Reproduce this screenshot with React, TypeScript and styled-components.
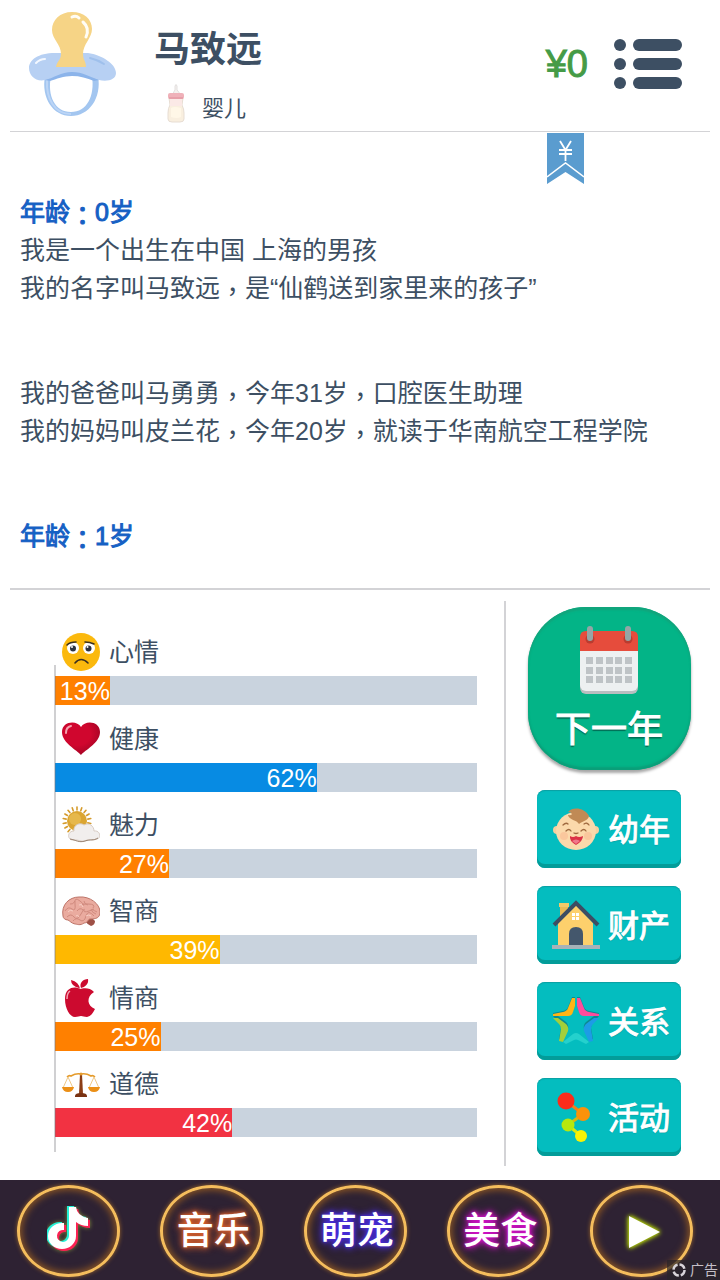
import React from "react";
import styled, { createGlobalStyle } from "styled-components";

const GlobalStyle = createGlobalStyle`
  :root {
    --ink: #3d4f63;
    --blue: #1560c4;
    --line: #d3d3d6;
    --track: #c9d3de;
  }
  * {
    box-sizing: border-box;
  }
  body {
    margin: 0;
    background: #fff;
    color: var(--ink);
    font-family: "Liberation Sans", "Noto Sans CJK SC", sans-serif;
  }
  button {
    font-family: inherit;
    border: none;
    padding: 0;
    cursor: pointer;
  }
`;

const Page = styled.div`
  min-height: 100vh;
  display: flex;
  flex-direction: column;
`;

const Header = styled.header`
  position: relative;
  display: flex;
  align-items: center;
  height: 132px;
  margin: 0 10px;
  padding: 0 28px 4px 18px;
  border-bottom: 1px solid var(--line);
`;

const Profile = styled.div`
  flex: 1;
  align-self: flex-start;
  margin-left: 38px;
  padding-top: 25px;
`;

const Name = styled.h1`
  margin: 0 0 8px;
  font-size: 36px;
  line-height: 50px;
  font-weight: 700;
`;

const Stage = styled.div`
  display: flex;
  align-items: flex-end;
  gap: 16px;
  padding-left: 12px;
  height: 40px;
  font-size: 22px;
  line-height: 28px;
`;

const Money = styled.span`
  margin-right: 26px;
  font-size: 38px;
  line-height: 44px;
  color: #459b46;
  -webkit-text-stroke: 1px #459b46;
`;

const MenuButton = styled.button`
  display: flex;
  background: none;
`;

const Ribbon = styled.button`
  position: absolute;
  top: 133px;
  right: 126px;
  display: flex;
  background: none;
`;

const Log = styled.main`
  flex: 1;
  margin: 0 10px;
  padding: 61px 10px 0;
  border-bottom: 2px solid var(--line);
`;

const Entry = styled.section`
  margin-bottom: 67px;
`;

const Age = styled.h2`
  margin: 0;
  font-size: 25px;
  line-height: 38px;
  font-weight: 400;
  color: var(--blue);
  -webkit-text-stroke: 1px var(--blue);
`;

const Line = styled.p`
  margin: 0;
  font-size: 25px;
  line-height: 38px;
`;

// full-width punctuation sits in the middle of its cell, close to the baseline
const Mark = styled.span`
  font-family: "Noto Sans CJK TC", sans-serif;
  line-height: 1;
  vertical-align: -4px;
`;

const Board = styled.div`
  display: flex;
  padding: 11px 0 14px;
`;

const Stats = styled.ul`
  position: relative;
  flex: 1;
  display: flex;
  flex-direction: column;
  margin: 0 27px 0 55px;
  padding: 18px 0 29px;
  list-style: none;
  &::before {
    content: "";
    position: absolute;
    top: 64px;
    bottom: 14px;
    left: -1px;
    width: 2px;
    background: rgba(120, 120, 125, 0.35);
  }
`;

const Stat = styled.li`
  flex: 1;
  display: flex;
  flex-direction: column;
  justify-content: flex-end;
`;

const StatLabel = styled.div`
  display: flex;
  align-items: center;
  gap: 9px;
  padding: 0 0 5px 7px;
  font-size: 25px;
  line-height: 38px;
`;

const Track = styled.div`
  height: 29px;
  background: var(--track);
`;

const Fill = styled.div<{ $color: string }>`
  height: 29px;
  background: ${({ $color }) => $color};
  color: #fff;
  font-size: 25px;
  line-height: 31px;
  text-align: right;
  white-space: nowrap;
`;

const Actions = styled.div`
  flex: none;
  display: flex;
  flex-direction: column;
  align-items: center;
  width: 216px;
  padding: 6px 8px 10px 0;
  border-left: 2px solid var(--line);
`;

const NextYear = styled.button`
  display: flex;
  flex-direction: column;
  align-items: center;
  gap: 9px;
  width: 163px;
  height: 163px;
  margin-bottom: 20px;
  padding-top: 19px;
  border-radius: 58px;
  background: #03b487;
  box-shadow: inset 0 3px 2px #11a57c, inset 0 -3px 2px #0a9f79,
    0 3px 3px rgba(0, 0, 0, 0.35);
  color: #fff;
  font-size: 36px;
  line-height: 50px;
  -webkit-text-stroke: 1px #fff;
  text-shadow: 0 2px 1px rgba(0, 60, 50, 0.6);
`;

const ActionList = styled.div`
  display: flex;
  flex-direction: column;
  gap: 18px;
`;

const Action = styled.button`
  display: flex;
  align-items: center;
  gap: 8px;
  width: 144px;
  height: 78px;
  padding: 0 0 0 15px;
  border-radius: 8px;
  background: #04bdbf;
  box-shadow: inset 0 -4px 0 #039c99, inset 0 1px 1px #0a9fa2;
  color: #fff;
`;

const ActionLabel = styled.span`
  padding-top: 4px;
  font-size: 31px;
  line-height: 40px;
  -webkit-text-stroke: 1px #fff;
  text-shadow: 0 1px 1px rgba(0, 80, 90, 0.45);
`;

const AdBar = styled.nav`
  position: relative;
  display: flex;
  justify-content: space-between;
  height: 100px;
  padding: 5px 27px 0 17px;
  background: #2e2233;
`;

const AdLink = styled.a`
  display: flex;
  align-items: center;
  justify-content: center;
  width: 103px;
  height: 92px;
  padding-left: 4px;
  border: 3px solid #f5bd5c;
  border-radius: 50%;
  box-shadow: inset 0 0 7px 2px #8c5623, 0 0 4px #9a6428;
  text-decoration: none;
`;

const Neon = styled.span<{ $glow: string }>`
  padding-bottom: 6px;
  color: #fff;
  font-size: 37px;
  font-weight: 500;
  white-space: nowrap;
  text-shadow: 0 0 3px ${({ $glow }) => $glow}, 0 0 6px ${({ $glow }) => $glow},
    0 0 9px ${({ $glow }) => $glow};
`;

const AdTag = styled.span`
  position: absolute;
  right: 0;
  bottom: 0;
  display: flex;
  align-items: center;
  gap: 3px;
  padding: 0 2px 0 4px;
  background: rgba(40, 35, 42, 0.7);
  color: #c4c0c6;
  font-size: 14px;
  line-height: 20px;
`;

const Pacifier = () => (
  <svg width="88" height="107" viewBox="0 0 88 107" aria-hidden="true">
    <path
      d="M17 66C13 88 25 106 43 106S74 88 70 66L64 66C67 86 59 102 43 102S19 86 23 66Z"
      fill="#a3c6f0"
    />
    <path d="M19 70C18 88 26 104 43 104" fill="none" stroke="#bcd5f6" strokeWidth="2" />
    <path
      d="M1 58C1 50 10 43 27 43H60C74 45 88 54 88 63C88 70 79 72 71 70C62 67 55 65 44 65S27 68 17 70C8 72 1 66 1 58Z"
      fill="#b7d0f3"
    />
    <path
      d="M17 70C26 68 33 62 44 62S62 67 71 70L66 71C59 68 52 66 44 66S28 69 22 71Z"
      fill="#8cb4ea"
    />
    <path
      d="M44 2C32 2 24 10 24 20C24 29 33 34 33 44C33 50 29 51 28 57H58C58 51 55 50 55 44C55 34 64 28 64 19C64 9 56 2 44 2Z"
      fill="#f6d486"
    />
    <path
      d="M44 7q4-2 7 1M55 12q7 6 3 15"
      fill="none"
      stroke="#fffdf5"
      strokeWidth="3"
      strokeLinecap="round"
    />
    <path
      d="M8 53q4-4 9-4"
      fill="none"
      stroke="#f4f8ff"
      strokeWidth="2"
      strokeLinecap="round"
    />
    <path
      d="M62 48q8 2 14 6"
      fill="none"
      stroke="#9fc0ec"
      strokeWidth="2"
      strokeLinecap="round"
    />
  </svg>
);

const Bottle = () => (
  <svg width="20" height="40" viewBox="0 0 20 40" aria-hidden="true">
    <path d="M7 11q1-3 2-4V3q1-3 2 0v4q2 2 3 4z" fill="#f5f1ef" stroke="#e2dfde" />
    <path
      d="M3 15h14l-1 7q2 4 2 8v6q0 3-4 3H6q-4 0-4-3v-6q0-5 2-8z"
      fill="#f9efdf"
      stroke="#e7ddd3"
    />
    <path d="M4 16h12v7H4z" fill="#fbe9e6" />
    <path d="M5 25q3-2 10 0v9q-4 2-10 0z" fill="#fff7e7" />
    <rect x="2" y="10" width="16" height="6" rx="2" fill="#efb1b9" />
    <path d="M3 15h14" stroke="#df8d99" />
  </svg>
);

const MenuIcon = () => (
  <svg width="68" height="50" viewBox="0 0 68 50" fill="#3d4f63" aria-hidden="true">
    {[6, 25, 44].map((y) => (
      <g key={y}>
        <circle cx="6" cy={y} r="6" />
        <rect x="19" y={y - 6} width="49" height="12" rx="6" />
      </g>
    ))}
  </svg>
);

const RibbonIcon = () => (
  <svg width="37" height="51" viewBox="0 0 37 51" aria-hidden="true">
    <path d="M0 0h37v51L18.500 39 0 51z" fill="#5a9ccf" />
    <path d="M0 44l18.500-14L37 44" fill="none" stroke="#fff" strokeWidth="1.500" />
    <path
      d="M13 8l5.500 9L24 8M18.500 17v11M12 17h13M12 21h13"
      fill="none"
      stroke="#fff"
      strokeWidth="1.800"
    />
  </svg>
);

const SadFace = () => (
  <svg width="38" height="38" viewBox="0 0 38 38" aria-hidden="true">
    <circle cx="19" cy="19" r="19" fill="#fbb90d" />
    <circle cx="11" cy="15" r="6" fill="#fff" />
    <circle cx="27" cy="15" r="6" fill="#fff" />
    <circle cx="11" cy="15.500" r="3" fill="#2c3340" />
    <circle cx="26.500" cy="15.500" r="3" fill="#2c3340" />
    <circle cx="10" cy="14" r="1" fill="#fff" />
    <circle cx="25.500" cy="14" r="1" fill="#fff" />
    <path
      d="M5 12q3-3 9-3M23 9q5 0 9 2M13 30q6-7 13 0"
      fill="none"
      stroke="#3a3020"
      strokeWidth="1.600"
      strokeLinecap="round"
    />
  </svg>
);

const Heart = () => (
  <svg width="38" height="38" viewBox="0 0 38 38" aria-hidden="true">
    <defs>
      <radialGradient id="heart" cx="0.4" cy="0.35" r="0.7">
        <stop offset="0.5" stopColor="#d0062e" />
        <stop offset="1" stopColor="#a00424" />
      </radialGradient>
    </defs>
    <path
      d="M19 35C15 30 0 23 0 12C0 1 15 0 19 7C23 0 38 1 38 12C38 23 23 30 19 35Z"
      fill="url(#heart)"
    />
    <path d="M4 13q0-6 5-7" fill="none" stroke="#f5a3b0" strokeWidth="2" strokeLinecap="round" />
  </svg>
);

const Weather = () => (
  <svg width="38" height="38" viewBox="0 0 38 38" aria-hidden="true">
    <g stroke="#d59b2b" strokeWidth="1.600" strokeLinecap="round">
      {Array.from({ length: 18 }, (_, i) => (
        <path key={i} d="M15 1v3" transform={`rotate(${i * 20} 15 15)`} />
      ))}
    </g>
    <circle cx="15" cy="15" r="10" fill="#dba531" />
    <circle cx="13" cy="13" r="6" fill="#e6b84c" />
    <path
      d="M11 34C5 34 5 25 12 25C11 19 18 16 22 19C27 16 32 20 32 25C38 24 40 32 35 33C31 35 28 33 25 34C20 37 16 33 11 34Z"
      fill="#f1eeed"
      stroke="#d9cdc5"
    />
    <path d="M8 33C14 34 17 37 23 35S31 35 36 32" fill="none" stroke="#97806f" />
  </svg>
);

const Brain = () => (
  <svg width="38" height="38" viewBox="0 0 38 38" aria-hidden="true">
    <path d="M22 28q8-4 11 1q0 4-4 5q-4-2-7-6z" fill="#9e5046" />
    <path
      d="M1 24C-1 13 7 5 17 5C28 4 38 12 38 20C38 26 34 27 28 27C26 27 26 31 22 31C18 34 15 32 13 32C9 31 8 29 6 28C3 28 1 26 1 24Z"
      fill="#eaab9f"
      stroke="#bd7468"
    />
    <path
      d="M3 19q3-5 7-2t3-5 5-3 3 4 5-1 5 4M5 25q4-4 7 0t7-3 3-4 5 1 4-2 4 3M11 29q3-4 7-1t6-4 8 0M8 12q3 1 5-3M15 19q3-4 6-1M29 17q1 4 5 5M22 9q0 3 4 4"
      fill="none"
      stroke="#d08a7e"
    />
    <path
      d="M6 20q2-3 5-1M17 13q3-2 4 2M24 24q3-2 5 0M14 24q2-2 3 1"
      fill="none"
      stroke="#f7cfc5"
    />
  </svg>
);

const Apple = () => (
  <svg width="38" height="38" viewBox="0 0 38 38" aria-hidden="true">
    <path
      d="M18 10C13 7 3 8 3 20C3 30 8 38 13 38C16 38 17 37 19 37S22 38 25 38C29 37 31 34 33 30C25 27 24 18 32 13C28 8 21 9 18 10Z"
      fill="#cc0a2f"
    />
    <path d="M18 10Q17 3 9 1Q9 7 17 9ZM19 9C17 4 21 0 26 0C27 5 23 8 19 9Z" fill="#cc0a2f" />
    <path d="M5 20q0-6 3-8" fill="none" stroke="#f3a2b1" strokeWidth="1.500" />
  </svg>
);

const Scales = () => (
  <svg width="38" height="38" viewBox="0 0 38 38" aria-hidden="true">
    <path d="M18 9h2l1 20h-4z" fill="#8b3d16" />
    <path d="M13 31q0-3 6-3t6 3v1H13z" fill="#7a3212" />
    <path
      d="M5 12q2-2 4-1 5-3 10-2 5-1 10 2 2-1 4 1"
      fill="none"
      stroke="#e59b2c"
      strokeWidth="1.600"
    />
    <path
      d="M6 12L1 23M6 12l5 11M32 12l-5 11M32 12l5 11"
      fill="none"
      stroke="#efc887"
    />
    <path d="M0 22h12q-1 5-6 5t-6-5zM26 22h12q-1 5-6 5t-6-5z" fill="#eb8f16" />
    <circle cx="19" cy="9" r="1.500" fill="#e59b2c" />
  </svg>
);

const CalendarIcon = () => (
  <svg width="58" height="70" viewBox="0 0 58 70" aria-hidden="true">
    <rect x="0" y="10" width="58" height="58" rx="6" fill="#b9bec0" />
    <rect x="0" y="8" width="58" height="57" rx="6" fill="#edf0f1" />
    <path d="M0 25V11q0-6 6-6h46q6 0 6 6v14z" fill="#e64c3c" />
    <circle cx="10" cy="13" r="4.500" fill="#b93c30" />
    <circle cx="48" cy="13" r="4.500" fill="#b93c30" />
    <rect x="7" y="0" width="6" height="15" rx="3" fill="#95a5a5" />
    <rect x="45" y="0" width="6" height="15" rx="3" fill="#95a5a5" />
    <g fill="#bec3c6">
      {[31, 41, 50].map((y) =>
        [6, 16, 26, 35, 45].map((x) => (
          <rect key={`${x}-${y}`} x={x} y={y} width="7" height="7" />
        ))
      )}
    </g>
  </svg>
);

const BabyIcon = () => (
  <svg width="48" height="48" viewBox="0 0 48 48" aria-hidden="true">
    <circle cx="5" cy="25" r="4" fill="#f7cf9f" />
    <circle cx="43" cy="25" r="4" fill="#f7cf9f" />
    <ellipse cx="24" cy="26" rx="20" ry="19" fill="#fbd9ab" />
    <path d="M16 7C21 1 33 3 37 11C36 16 30 16 27 19C25 15 17 15 16 10C22 11 20 7 16 7Z" fill="#c08a55" />
    <circle cx="12" cy="31" r="4" fill="#fac79d" />
    <circle cx="36" cy="31" r="4" fill="#fac79d" />
    <path
      d="M11 20q3-3 5-1M32 19q3-2 5 1M14 26q3-3 5 0M29 26q3-3 5 0M22 28q2 1 4 0"
      fill="none"
      stroke="#a06a40"
      strokeWidth="1.300"
      strokeLinecap="round"
    />
    <path d="M18 31Q21 33 24 31Q27 33 31 31Q31 36 24 40Q17 36 18 31Z" fill="#dc3146" />
    <path d="M20 36q4-3 8 0l-4 3z" fill="#f0788a" />
  </svg>
);

const HouseIcon = () => (
  <svg width="48" height="50" viewBox="0 0 48 50" aria-hidden="true">
    <path d="M8 4h8v10l-8 7z" fill="#eaba54" />
    <path d="M7 3h10v4H7z" fill="#f3c969" />
    <path d="M6 23L24 5l17 18v22H6z" fill="#fdd06c" />
    <path
      d="M2 25L24 3l22 22"
      fill="none"
      stroke="#3d4d63"
      strokeWidth="4"
    />
    <path d="M17 45V34q0-7 7-7t7 7v11z" fill="#44576c" />
    <path d="M20 13h3v3h-3zM24 13h3v3h-3zM20 17h3v3h-3zM24 17h3v3h-3z" fill="#fff" />
    <path d="M0 45h48v4H0z" fill="#a7b2b8" />
  </svg>
);

const StarIcon = () => (
  <svg width="48" height="48" viewBox="0 0 48 48" aria-hidden="true">
    <g fill="#0b8a92" transform="translate(0 -1)">
      <path d="M20 1h3v8l-2 6q-1 4-5 4H1v-2l10-2q4-1 5-4z" />
      <path d="M28 1h-3v8l2 6q1 4 5 4h15v-2l-10-2q-4-1-5-4z" />
      <path d="M1 20h5l8 6q3 3 2 7l-5 11-4-1 2-11q0-3-2-5z" />
      <path d="M47 20h-5l-8 6q-3 3-2 7l5 11 4-1-2-11q0-3 2-5z" />
    </g>
    <path d="M20 1h3v8l-2 6q-1 4-5 4H1v-2l10-2q4-1 5-4z" fill="#ffb515" />
    <path d="M28 1h-3v8l2 6q1 4 5 4h15v-2l-10-2q-4-1-5-4z" fill="#ff4c9c" />
    <path d="M1 21h5l8 6q3 3 2 7l-5 11-4-1 2-12q0-3-2-5z" fill="#a3cf3b" />
    <path d="M47 21h-5l-8 6q-3 3-2 7l5 11 4-1-2-12q0-3 2-5z" fill="#1d9ce5" />
    <path d="M11 45l10-8q3-2 6 0l10 8-3 2-8-4q-2-1-4 0l-8 4z" fill="#24d1cd" />
  </svg>
);

const DotsIcon = () => (
  <svg width="48" height="52" viewBox="0 0 48 52" aria-hidden="true">
    <path d="M14 10l17 13" stroke="#f47d1a" strokeWidth="3" />
    <path d="M31 23L16 34" stroke="#d6b810" strokeWidth="3" />
    <path d="M16 34l13 11" stroke="#d9ea0a" strokeWidth="3" />
    <circle cx="14" cy="10" r="8.500" fill="#fb2c1a" />
    <circle cx="31" cy="23" r="7" fill="#fb920a" />
    <circle cx="16" cy="34" r="6.500" fill="#b6e80e" />
    <circle cx="29" cy="45" r="6" fill="#f9f205" />
  </svg>
);

const notePath =
  "M23 1h7q1 9 12 11v8q-7 0-12-4v14a14 13 0 1 1-14-13h2v7a6 6 0 1 0 5 6z";

const NoteIcon = () => (
  <svg width="48" height="50" viewBox="0 0 48 50" aria-hidden="true">
    <g style={{ filter: "drop-shadow(0 0 2px #7d8a3a)" }}>
      <path d={notePath} fill="#25f0d6" transform="translate(-3 -1)" />
      <path d={notePath} fill="#fb2153" transform="translate(1 2)" />
      <path d={notePath} fill="#fff" transform="translate(-1 0)" />
    </g>
  </svg>
);

const PlayIcon = () => (
  <svg width="44" height="44" viewBox="0 0 44 44" aria-hidden="true">
    <path
      d="M7 7v32l31-16z"
      fill="#fff"
      style={{ filter: "drop-shadow(0 0 2px #c2dc10) drop-shadow(0 0 2px #a5c800)" }}
    />
  </svg>
);

const SpinnerIcon = () => (
  <svg width="16" height="16" viewBox="0 0 16 16" aria-hidden="true">
    <circle
      cx="8"
      cy="8"
      r="5.500"
      fill="none"
      stroke="#d8d5da"
      strokeWidth="2.500"
      strokeDasharray="6.600 2"
    />
  </svg>
);

const stats = [
  { label: "心情", value: 13, color: "#ff8000", icon: <SadFace /> },
  { label: "健康", value: 62, color: "#078be3", icon: <Heart /> },
  { label: "魅力", value: 27, color: "#ff8000", icon: <Weather /> },
  { label: "智商", value: 39, color: "#ffb800", icon: <Brain /> },
  { label: "情商", value: 25, color: "#ff8000", icon: <Apple /> },
  { label: "道德", value: 42, color: "#f23242", icon: <Scales /> },
];

const actions = [
  { label: "幼年", icon: <BabyIcon /> },
  { label: "财产", icon: <HouseIcon /> },
  { label: "关系", icon: <StarIcon /> },
  { label: "活动", icon: <DotsIcon /> },
];

const Text = ({ children }: { children: string }) => (
  <>
    {children.split(/([，：])/).map((part, i) =>
      i % 2 ? (
        <Mark key={i} lang="zh-TW">
          {part}
        </Mark>
      ) : (
        part
      )
    )}
  </>
);

export default function App() {
  return (
    <Page lang="zh-CN">
      <GlobalStyle />
      <Header>
        <Pacifier />
        <Profile>
          <Name>马致远</Name>
          <Stage>
            <Bottle />
            婴儿
          </Stage>
        </Profile>
        <Money>¥0</Money>
        <MenuButton aria-label="菜单">
          <MenuIcon />
        </MenuButton>
        <Ribbon aria-label="资产">
          <RibbonIcon />
        </Ribbon>
      </Header>

      <Log>
        <Entry>
          <Age>
            <Text>年龄：0岁</Text>
          </Age>
          <Line>我是一个出生在中国 上海的男孩</Line>
          <Line>
            <Text>我的名字叫马致远，是“仙鹤送到家里来的孩子”</Text>
          </Line>
        </Entry>
        <Entry>
          <Line>
            <Text>我的爸爸叫马勇勇，今年31岁，口腔医生助理</Text>
          </Line>
          <Line>
            <Text>我的妈妈叫皮兰花，今年20岁，就读于华南航空工程学院</Text>
          </Line>
        </Entry>
        <Age>
          <Text>年龄：1岁</Text>
        </Age>
      </Log>

      <Board>
        <Stats>
          {stats.map(({ label, value, color, icon }) => (
            <Stat key={label}>
              <StatLabel>
                {icon}
                {label}
              </StatLabel>
              <Track>
                <Fill $color={color} style={{ width: `${value}%` }}>
                  {value}%
                </Fill>
              </Track>
            </Stat>
          ))}
        </Stats>
        <Actions>
          <NextYear>
            <CalendarIcon />
            <span>下一年</span>
          </NextYear>
          <ActionList>
            {actions.map(({ label, icon }) => (
              <Action key={label}>
                {icon}
                <ActionLabel>{label}</ActionLabel>
              </Action>
            ))}
          </ActionList>
        </Actions>
      </Board>

      <AdBar>
        <AdLink href="#douyin" aria-label="抖音">
          <NoteIcon />
        </AdLink>
        <AdLink href="#music">
          <Neon $glow="#e0622c">音乐</Neon>
        </AdLink>
        <AdLink href="#pets">
          <Neon $glow="#4a2ee8">萌宠</Neon>
        </AdLink>
        <AdLink href="#food">
          <Neon $glow="#d312c8">美食</Neon>
        </AdLink>
        <AdLink href="#play" aria-label="播放">
          <PlayIcon />
        </AdLink>
        <AdTag>
          <SpinnerIcon />
          广告
        </AdTag>
      </AdBar>
    </Page>
  );
}
